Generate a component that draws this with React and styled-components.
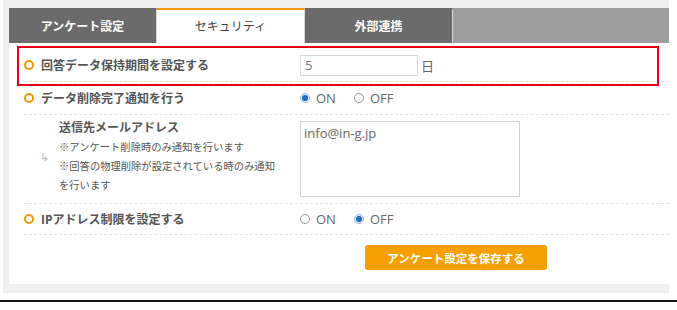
import styled, { createGlobalStyle } from 'styled-components';

const GlobalStyle = createGlobalStyle`
    body {
        margin: 0;
        background: #fff;
        font-family: "Open Sans", "Noto Sans CJK JP", sans-serif;
        color: #555;
    }
`;

const Frame = styled.div`
    width: 666px;
    margin-left: 3px;
    padding: 8px 0 9px 6px;
    box-sizing: border-box;
    background: #efefef;
`;

const TabBar = styled.div`
    display: flex;
    height: 35px;
`;

const Tab = styled.div`
    width: 148px;
    display: flex;
    align-items: center;
    justify-content: center;
    box-sizing: border-box;
    font-size: 12px;
    font-weight: ${p => (p.$active ? 400 : 700)};
    color: ${p => (p.$active ? '#444' : '#fff')};
    background: ${p => (p.$active ? '#fff' : '#6b6b6b')};
    border-top: 2px solid ${p => (p.$active ? '#f39800' : '#6b6b6b')};
    border-right: 1px solid #d8d8d8;
    padding-bottom: 2px;
`;

const TabFiller = styled.div`
    flex: 1;
    background: #9e9e9e;
`;

const Panel = styled.div`
    position: relative;
    background: #fff;
    padding: 6px 0 14px 15px;
`;

const Highlight = styled.div`
    position: absolute;
    left: 8px;
    top: 3px;
    width: 642px;
    height: 40px;
    box-sizing: border-box;
    border: 2px solid #e60012;
    pointer-events: none;
`;

const Row = styled.div`
    display: flex;
    align-items: center;
    min-height: ${p => p.$h || 32}px;
    border-bottom: 1px dashed #e2e2e2;
    box-sizing: border-box;
`;

const Label = styled.div`
    width: 276px;
    flex: none;
    display: flex;
    align-items: center;
    gap: 7px;
    font-size: 12px;
    font-weight: 700;
    color: #555;
`;

const Ring = styled.span`
    width: 10px;
    height: 10px;
    box-sizing: border-box;
    border: 2.5px solid #f39800;
    border-radius: 50%;
    flex: none;
`;

const Value = styled.div`
    display: flex;
    align-items: center;
    font-size: 13px;
    color: #666;
`;

const NumInput = styled.div`
    width: 118px;
    height: 21px;
    box-sizing: border-box;
    border: 1px solid #d9d9d9;
    padding: 0 4px;
    font-size: 13px;
    line-height: 19px;
    color: #777;
`;

const Unit = styled.span`
    margin-left: 3px;
    font-size: 13px;
    color: #666;
`;

const Choice = styled.label`
    display: flex;
    align-items: center;
    gap: 6px;
    margin-right: 18px;
    font-size: 13px;
    color: #666;
`;

const Radio = styled.span`
    width: 10px;
    height: 10px;
    box-sizing: border-box;
    border-radius: 50%;
    border: 1px solid ${p => (p.$on ? '#9bbde0' : '#999')};
    background: ${p => (p.$on ? 'radial-gradient(circle, #1f6fc4 0 2.8px, #dfeaf6 3.2px)' : '#fff')};
`;

const SubLabel = styled.div`
    width: 276px;
    flex: none;
    display: flex;
    align-items: center;
`;

const Arrow = styled.span`
    width: 35px;
    padding: 0 0 6px 16px;
    box-sizing: border-box;
    font-size: 11px;
    color: #b8b8b8;
`;

const SubText = styled.div`
    padding-bottom: 4px;
    h4 {
        margin: 0 0 2px;
        font-size: 12px;
        line-height: 17px;
        font-weight: 700;
        color: #555;
    }
    p {
        margin: 0;
        font-size: 10.3px;
        line-height: 19px;
        color: #555;
    }
`;

const Mailbox = styled.div`
    width: 220px;
    height: 76px;
    box-sizing: border-box;
    border: 1px solid #d0d0d0;
    padding: 2px 3px;
    font-size: 13px;
    line-height: 18px;
    color: #666;
`;

const Actions = styled.div`
    padding: 10px 0 0 341px;
`;

const SaveButton = styled.button`
    width: 182px;
    height: 25px;
    border: none;
    border-radius: 3px;
    background: #f5a000;
    color: #fff;
    font-family: "Noto Sans CJK JP", sans-serif;
    font-size: 11.5px;
    font-weight: 700;
    cursor: pointer;
`;

const Rule = styled.div`
    margin-top: 7px;
    height: 2px;
    background: #111;
`;

const Option = ({ on, children }) => (
    <Choice>
        <Radio $on={on} />
        {children}
    </Choice>
);

const App = () => (
    <>
        <GlobalStyle />
        <Frame>
            <TabBar>
                <Tab>アンケート設定</Tab>
                <Tab $active>セキュリティ</Tab>
                <Tab>外部連携</Tab>
                <TabFiller />
            </TabBar>
            <Panel>
                <Highlight />
                <Row $h={33}>
                    <Label><Ring />回答データ保持期間を設定する</Label>
                    <Value>
                        <NumInput>5</NumInput>
                        <Unit>日</Unit>
                    </Value>
                </Row>
                <Row $h={33}>
                    <Label><Ring />データ削除完了通知を行う</Label>
                    <Value>
                        <Option on>ON</Option>
                        <Option>OFF</Option>
                    </Value>
                </Row>
                <Row $h={89}>
                    <SubLabel>
                        <Arrow>↳</Arrow>
                        <SubText>
                            <h4>送信先メールアドレス</h4>
                            <p>※アンケート削除時のみ通知を行います</p>
                            <p>※回答の物理削除が設定されている時のみ通知<br />を行います</p>
                        </SubText>
                    </SubLabel>
                    <Mailbox>info@in-g.jp</Mailbox>
                </Row>
                <Row $h={31}>
                    <Label><Ring />IPアドレス制限を設定する</Label>
                    <Value>
                        <Option>ON</Option>
                        <Option on>OFF</Option>
                    </Value>
                </Row>
                <Actions>
                    <SaveButton>アンケート設定を保存する</SaveButton>
                </Actions>
            </Panel>
        </Frame>
        <Rule />
    </>
);

export default App;
